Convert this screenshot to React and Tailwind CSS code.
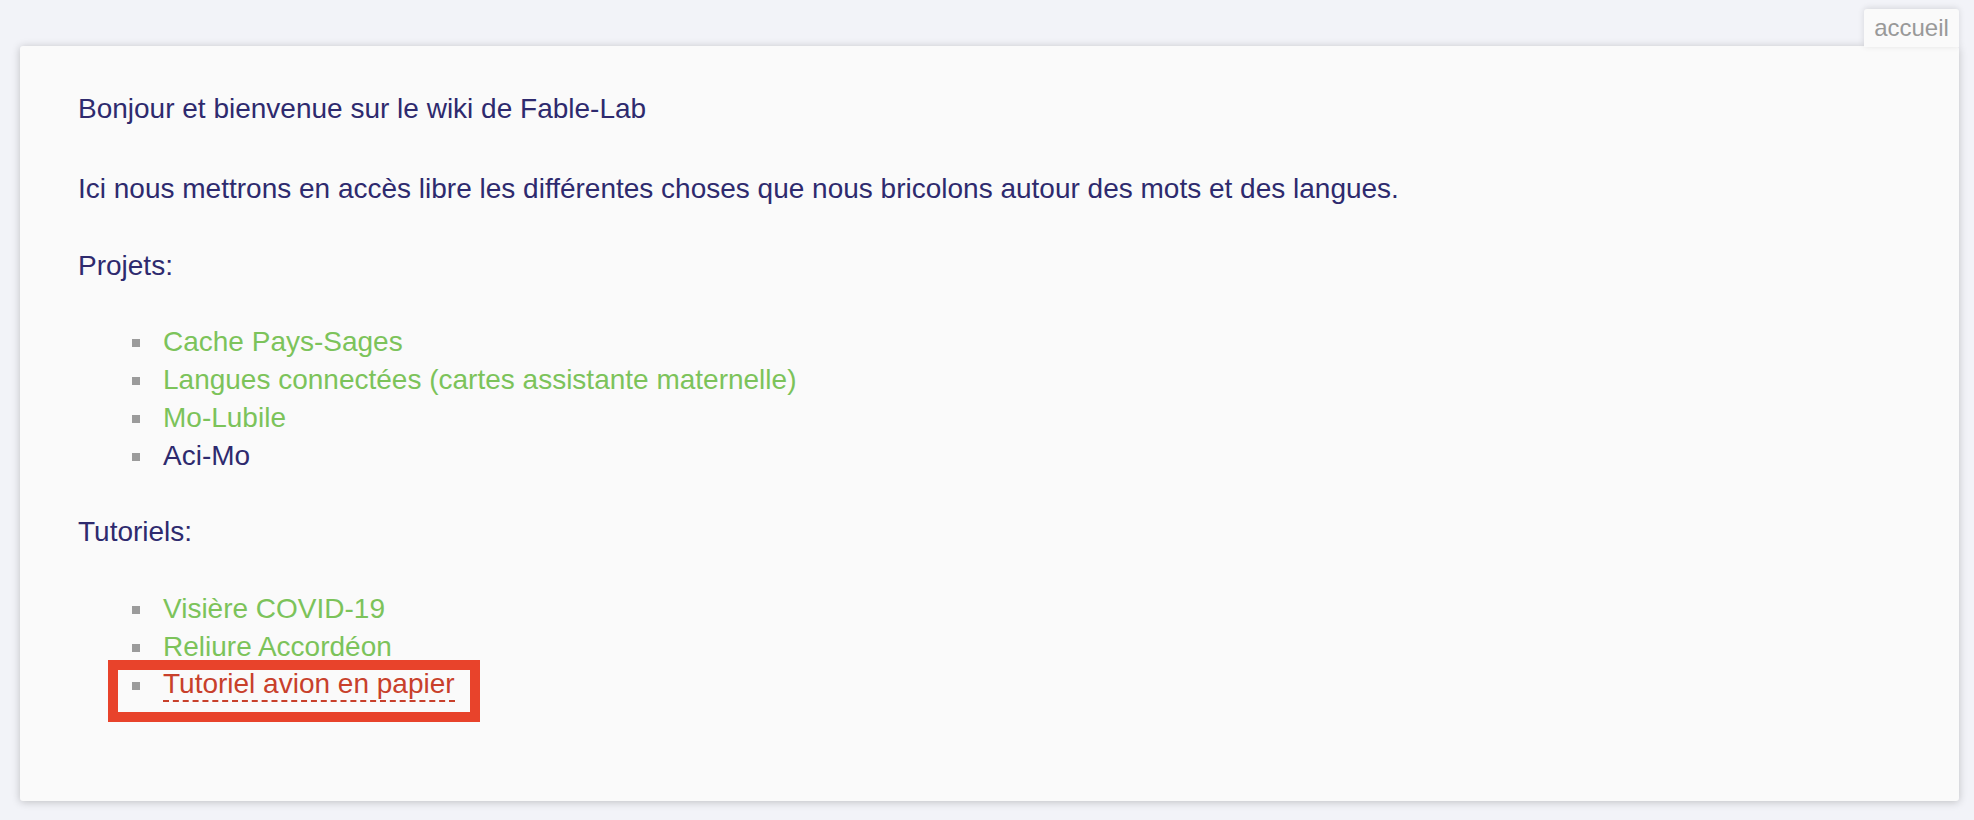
export default function App() {
  const font = { fontFamily: '"Liberation Sans", Arial, Helvetica, sans-serif' };
  const Bullet = () => <span className="mr-[23px] mt-[2px] h-[8px] w-[8px] shrink-0 bg-[#9b9b9b]" />;
  return (
    <div className="min-h-[820px] w-full bg-[#f2f3f8] pt-[9px]" style={font}>
      <div className="flex flex-col pl-[20px] pr-[15px]">
        <div className="flex justify-end">
          <div className="relative z-10 flex h-[38px] w-[95px] items-start justify-center rounded-t-[3px] bg-[#fafafa] pt-[5px] text-[24px] leading-[28px] text-[#999999] shadow-[0_-1px_6px_rgba(0,0,0,0.12)]">
            accueil
          </div>
        </div>
        <div className="-mt-[1px] h-[755px] rounded-[3px] bg-[#fafafa] pl-[58px] pt-[44px] text-[28px] leading-[38px] text-[#2e2a6e] shadow-[0_1px_8px_rgba(0,0,0,0.22)]">
          <p className="mb-[42px]">Bonjour et bienvenue sur le wiki de Fable-Lab</p>
          <p className="mb-[39px]">Ici nous mettrons en accès libre les différentes choses que nous bricolons autour des mots et des langues.</p>
          <p className="mb-[38px]">Projets:</p>
          <ul className="mb-[38px] pl-[54px]">
            <li className="flex items-center"><Bullet /><span className="text-[#7cc35a]">Cache Pays-Sages</span></li>
            <li className="flex items-center"><Bullet /><span className="text-[#7cc35a]">Langues connectées (cartes assistante maternelle)</span></li>
            <li className="flex items-center"><Bullet /><span className="text-[#7cc35a]">Mo-Lubile</span></li>
            <li className="flex items-center"><Bullet /><span>Aci-Mo</span></li>
          </ul>
          <p className="mb-[39px]">Tutoriels:</p>
          <ul className="pl-[54px]">
            <li className="flex items-center"><Bullet /><span className="text-[#7cc35a]">Visière COVID-19</span></li>
            <li className="flex items-center"><Bullet /><span className="text-[#7cc35a]">Reliure Accordéon</span></li>
            <li className="relative mt-[2px] flex items-center">
              <Bullet />
              <span className="border-b-2 border-dashed border-[#c8402b] leading-[32px] text-[#c8402b]">Tutoriel avion en papier</span>
              <div className="pointer-events-none absolute left-[-24px] top-[-8px] h-[62px] w-[372px] border-[10px] border-[#e8432b]" />
            </li>
          </ul>
        </div>
      </div>
    </div>
  );
}
